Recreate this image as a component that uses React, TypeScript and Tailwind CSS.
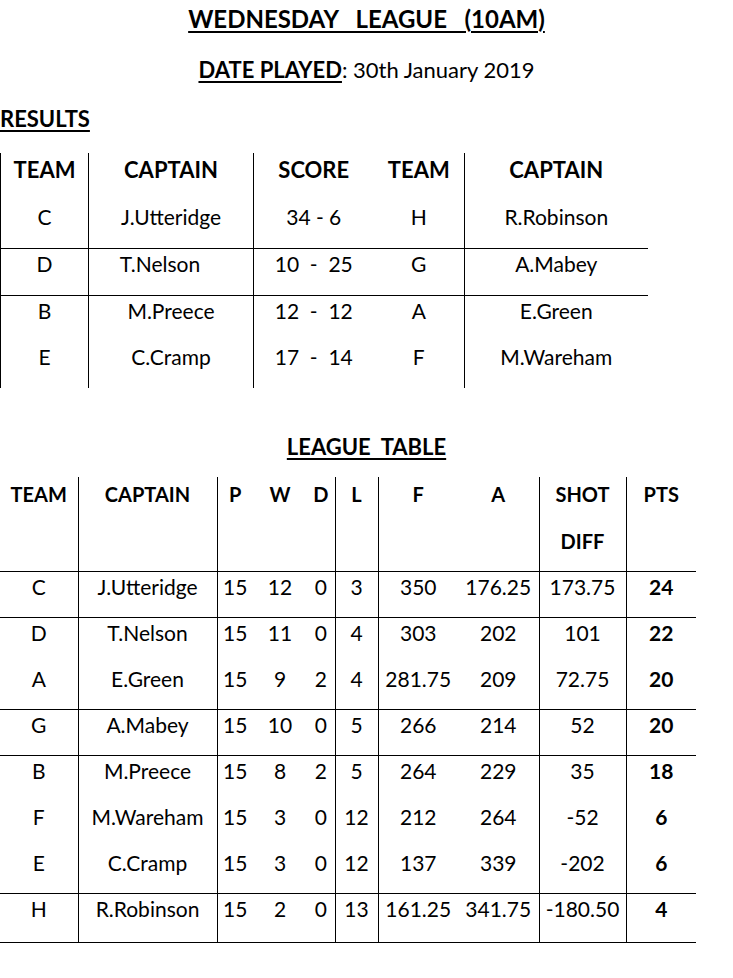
const results = [
  { team: "C", captain: "J.Utteridge", score: "34 - 6", opp: "H", oppCaptain: "R.Robinson", line: true },
  { team: "D", captain: "T.Nelson", score: "10  -  25", opp: "G", oppCaptain: "A.Mabey", line: true, shift: true },
  { team: "B", captain: "M.Preece", score: "12  -  12", opp: "A", oppCaptain: "E.Green", line: false },
  { team: "E", captain: "C.Cramp", score: "17  -  14", opp: "F", oppCaptain: "M.Wareham", line: false },
];

const table = [
  { team: "C", captain: "J.Utteridge", p: 15, w: 12, d: 0, l: 3, f: "350", a: "176.25", diff: "173.75", pts: 24, line: true },
  { team: "D", captain: "T.Nelson", p: 15, w: 11, d: 0, l: 4, f: "303", a: "202", diff: "101", pts: 22, line: false },
  { team: "A", captain: "E.Green", p: 15, w: 9, d: 2, l: 4, f: "281.75", a: "209", diff: "72.75", pts: 20, line: true },
  { team: "G", captain: "A.Mabey", p: 15, w: 10, d: 0, l: 5, f: "266", a: "214", diff: "52", pts: 20, line: true },
  { team: "B", captain: "M.Preece", p: 15, w: 8, d: 2, l: 5, f: "264", a: "229", diff: "35", pts: 18, line: false },
  { team: "F", captain: "M.Wareham", p: 15, w: 3, d: 0, l: 12, f: "212", a: "264", diff: "-52", pts: 6, line: false },
  { team: "E", captain: "C.Cramp", p: 15, w: 3, d: 0, l: 12, f: "137", a: "339", diff: "-202", pts: 6, line: true },
  { team: "H", captain: "R.Robinson", p: 15, w: 2, d: 0, l: 13, f: "161.25", a: "341.75", diff: "-180.50", pts: 4, line: true, last: true },
];

export default function App() {
  const cell = "p-0 leading-[30px] align-top text-center whitespace-pre";
  const head = "p-0 pt-[2px] leading-[30px] align-top text-center font-bold";

  return (
    <div className="w-[733px] min-h-[978px] bg-white text-black font-['Lato',sans-serif] text-[21px]">
      {/* Heading */}
      <h1 className="pt-[4px] text-center text-[24px] font-bold leading-[30px]">
        <span className="whitespace-pre underline decoration-2 underline-offset-[3px]">WEDNESDAY   LEAGUE   (10AM)</span>
      </h1>
      <p className="mt-[21px] text-center text-[22px] leading-[30px]">
        <span className="font-bold underline decoration-2 underline-offset-[3px]">DATE PLAYED</span>: 30th January 2019
      </p>

      {/* Results */}
      <h2 className="mt-[19px] text-[22px] font-bold leading-[30px]">
        <span className="underline decoration-2 underline-offset-[3px]">RESULTS</span>
      </h2>
      <table className="mt-[19px] w-[647px] table-fixed border-collapse">
        <colgroup>
          <col className="w-[88px]" />
          <col className="w-[165px]" />
          <col className="w-[120px]" />
          <col className="w-[91px]" />
          <col className="w-[183px]" />
        </colgroup>
        <thead>
          <tr className="text-[22px]">
            <th className={`${head} pb-[17px] border-l border-black`}>TEAM</th>
            <th className={`${head} pb-[17px] border-l border-black`}>CAPTAIN</th>
            <th className={`${head} pb-[17px] border-l border-black`}>SCORE</th>
            <th className={`${head} pb-[17px]`}>TEAM</th>
            <th className={`${head} pb-[17px] border-l border-black`}>CAPTAIN</th>
          </tr>
        </thead>
        <tbody>
          {results.map((r) => {
            const b = r.line ? "border-b border-black pb-[16px]" : "pb-[16px]";
            return (
              <tr key={r.team}>
                <td className={`${cell} ${b} border-l border-black`}>{r.team}</td>
                <td className={`${cell} ${b} border-l border-black ${r.shift ? "pr-[22px]" : ""}`}>{r.captain}</td>
                <td className={`${cell} ${b} border-l border-black`}>{r.score}</td>
                <td className={`${cell} ${b}`}>{r.opp}</td>
                <td className={`${cell} ${b} border-l border-black`}>{r.oppCaptain}</td>
              </tr>
            );
          })}
        </tbody>
      </table>

      {/* League table */}
      <h2 className="mt-[44px] text-center text-[22px] font-bold leading-[30px]">
        <span className="whitespace-pre underline decoration-2 underline-offset-[3px]">LEAGUE  TABLE</span>
      </h2>
      <table className="mt-[15px] w-[696px] table-fixed border-collapse">
        <colgroup>
          <col className="w-[78px]" />
          <col className="w-[139px]" />
          <col className="w-[36px]" />
          <col className="w-[54px]" />
          <col className="w-[28px]" />
          <col className="w-[43px]" />
          <col className="w-[80px]" />
          <col className="w-[81px]" />
          <col className="w-[87px]" />
          <col className="w-[70px]" />
        </colgroup>
        <thead>
          <tr className="border-b border-black text-[20px]">
            <th className={`${head} pb-[15px]`}>TEAM</th>
            <th className={`${head} pb-[15px] border-l border-black`}>CAPTAIN</th>
            <th className={`${head} pb-[15px] border-l border-black`}>P</th>
            <th className={`${head} pb-[15px]`}>W</th>
            <th className={`${head} pb-[15px]`}>D</th>
            <th className={`${head} pb-[15px] border-l border-black`}>L</th>
            <th className={`${head} pb-[15px] border-l border-black`}>F</th>
            <th className={`${head} pb-[15px]`}>A</th>
            <th className={`${head} pb-[15px] border-l border-black`}>
              <div className="mb-[17px]">SHOT</div>
              <div>DIFF</div>
            </th>
            <th className={`${head} pb-[15px] border-l border-black`}>PTS</th>
          </tr>
        </thead>
        <tbody>
          {table.map((r) => {
            const pb = r.last ? "pb-[18px]" : r.line ? "pb-[15px]" : "pb-[16px]";
            return (
              <tr key={r.team} className={r.line ? "border-b border-black" : ""}>
                <td className={`${cell} ${pb}`}>{r.team}</td>
                <td className={`${cell} ${pb} border-l border-black`}>{r.captain}</td>
                <td className={`${cell} ${pb} border-l border-black`}>{r.p}</td>
                <td className={`${cell} ${pb}`}>{r.w}</td>
                <td className={`${cell} ${pb}`}>{r.d}</td>
                <td className={`${cell} ${pb} border-l border-black`}>{r.l}</td>
                <td className={`${cell} ${pb} border-l border-black`}>{r.f}</td>
                <td className={`${cell} ${pb}`}>{r.a}</td>
                <td className={`${cell} ${pb} border-l border-black`}>{r.diff}</td>
                <td className={`${cell} ${pb} border-l border-black font-bold`}>{r.pts}</td>
              </tr>
            );
          })}
        </tbody>
      </table>
    </div>
  );
}
